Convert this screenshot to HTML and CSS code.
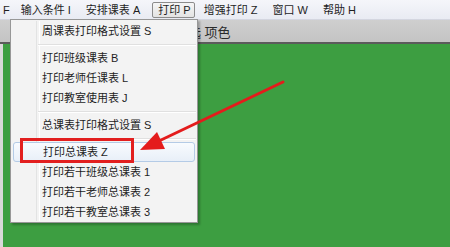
FILE: index.html
```html
<!DOCTYPE html>
<html lang="zh">
<head>
<meta charset="utf-8">
<link rel="stylesheet" href="styles.css">
</head>
<body>
<div class="screen">
  <div class="menubar">
    <span class="mitem first">F</span>
    <span class="mitem">输入条件 I</span>
    <span class="mitem">安排课表 A</span>
    <span class="mitem active">打印 P</span>
    <span class="mitem">增强打印 Z</span>
    <span class="mitem">窗口 W</span>
    <span class="mitem">帮助 H</span>
  </div>
  <div class="toolbar"><span class="tbtext">选 项色</span></div>
  <div class="workspace"></div>

  <div class="dropdown">
    <div class="ditem">周课表打印格式设置 S</div>
    <div class="sep"></div>
    <div class="ditem">打印班级课表 B</div>
    <div class="ditem">打印老师任课表 L</div>
    <div class="ditem">打印教室使用表 J</div>
    <div class="sep"></div>
    <div class="ditem">总课表打印格式设置 S</div>
    <div class="sep"></div>
    <div class="ditem hl">打印总课表 Z</div>
    <div class="ditem">打印若干班级总课表 1</div>
    <div class="ditem">打印若干老师总课表 2</div>
    <div class="ditem">打印若干教室总课表 3</div>
  </div>

  <div class="redbox"></div>
  <svg class="arrow" width="450" height="247" viewBox="0 0 450 247">
    <line x1="283" y1="82" x2="160" y2="140.5" stroke="#e41c1c" stroke-width="3" stroke-linecap="round"/>
    <polygon points="140,150 165,149 157,132" fill="#e41c1c"/>
  </svg>
</div>
</body>
</html>
```
FILE: styles.css
```css
* { box-sizing: border-box; }
html, body { margin: 0; padding: 0; }
body {
  width: 450px;
  height: 247px;
  overflow: hidden;
  font-family: "Liberation Sans", "Noto Sans CJK SC", sans-serif;
  font-size: 11px;
  color: #1e1e1e;
}
.screen {
  position: relative;
  width: 450px;
  height: 247px;
  display: flex;
  flex-direction: column;
  background: #d9d9d9;
}
.menubar {
  height: 20px;
  display: flex;
  align-items: center;
  background: linear-gradient(#f5f6fa, #e9ebf3);
  border-bottom: 1px solid #d4d6e0;
}
.mitem {
  height: 16px;
  line-height: 14px;
  padding: 0 7px 0 6px;
  border: 1px solid transparent;
  white-space: nowrap;
}
.mitem.first { padding: 0 3px 0 2px; }
.mitem.active {
  border-color: #8c8c8c;
  border-radius: 2px;
  background: linear-gradient(#f6f6f6, #e3e3e3);
  padding: 0 3px 0 5px;
  margin: 0 2px 0 4px;
}
.toolbar {
  height: 24px;
  background: linear-gradient(#cfcfcf, #c4c4c4);
  border-bottom: 2px solid #5b5b5b;
  display: flex;
  align-items: center;
  font-size: 13px;
  color: #2a2a2a;
}
.tbtext { margin-left: 188px; }
.workspace {
  flex: 1;
  margin-left: 3px;
  background: #3d9e41;
}
.dropdown {
  position: absolute;
  left: 10px;
  top: 19px;
  width: 188px;
  height: 204px;
  background: #f3f3f3;
  border: 1px solid #979797;
  box-shadow: 2px 2px 2px rgba(0,0,0,0.25);
  padding-top: 1px;
}
.dropdown::before {
  content: "";
  position: absolute;
  left: 25px;
  top: 1px;
  bottom: 1px;
  width: 2px;
  border-left: 1px solid #e2e3e3;
  border-right: 1px solid #ffffff;
}
.ditem {
  position: relative;
  height: 20px;
  line-height: 20px;
  padding-left: 31px;
  white-space: nowrap;
}
.ditem.hl {
  margin: 0 2px;
  padding-left: 29px;
  border: 1px solid #b4cbe6;
  border-radius: 3px;
  line-height: 18px;
  background: linear-gradient(#f8fbfe, #e8eff8);
}
.sep {
  height: 7px;
  margin-left: 27px;
  position: relative;
}
.sep::after {
  content: "";
  position: absolute;
  left: 0;
  right: 1px;
  top: 3px;
  border-top: 1px solid #e0e0e0;
  border-bottom: 1px solid #ffffff;
}
.redbox {
  position: absolute;
  left: 20px;
  top: 138px;
  width: 114px;
  height: 25px;
  border: 3px solid #e21f1f;
}
.arrow {
  position: absolute;
  left: 0;
  top: 0;
}
```
